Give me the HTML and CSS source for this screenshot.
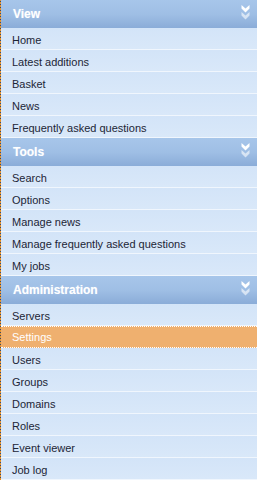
FILE: index.html
```html
<!DOCTYPE html>
<html lang="en">
<head>
  <meta charset="UTF-8" />
  <title>Navigation</title>
  <link rel="stylesheet" href="styles.css">
</head>
<body>
  <div class="sidebar">
    <div class="group">
      <div class="group-head">
        <span>View</span>
        <svg class="chevron" width="9" height="15" viewBox="0 0 9 15"><path d="M0.5 0 L4.5 3.5 L8.5 0 L8.5 3.5 L4.5 7.5 L0.5 3.5 Z" fill="#fff"/><path d="M0.5 7 L4.5 10.5 L8.5 7 L8.5 10.5 L4.5 14.5 L0.5 10.5 Z" fill="#fff" opacity="0.6"/></svg>
      </div>
      <ul class="items">
        <li>Home</li>
        <li>Latest additions</li>
        <li>Basket</li>
        <li>News</li>
        <li>Frequently asked questions</li>
      </ul>
    </div>
    <div class="group">
      <div class="group-head">
        <span>Tools</span>
        <svg class="chevron" width="9" height="15" viewBox="0 0 9 15"><path d="M0.5 0 L4.5 3.5 L8.5 0 L8.5 3.5 L4.5 7.5 L0.5 3.5 Z" fill="#fff"/><path d="M0.5 7 L4.5 10.5 L8.5 7 L8.5 10.5 L4.5 14.5 L0.5 10.5 Z" fill="#fff" opacity="0.6"/></svg>
      </div>
      <ul class="items">
        <li>Search</li>
        <li>Options</li>
        <li>Manage news</li>
        <li>Manage frequently asked questions</li>
        <li>My jobs</li>
      </ul>
    </div>
    <div class="group">
      <div class="group-head">
        <span>Administration</span>
        <svg class="chevron" width="9" height="15" viewBox="0 0 9 15"><path d="M0.5 0 L4.5 3.5 L8.5 0 L8.5 3.5 L4.5 7.5 L0.5 3.5 Z" fill="#fff"/><path d="M0.5 7 L4.5 10.5 L8.5 7 L8.5 10.5 L4.5 14.5 L0.5 10.5 Z" fill="#fff" opacity="0.6"/></svg>
      </div>
      <ul class="items">
        <li>Servers</li>
        <li class="active">Settings</li>
        <li>Users</li>
        <li>Groups</li>
        <li>Domains</li>
        <li>Roles</li>
        <li>Event viewer</li>
        <li>Job log</li>
      </ul>
    </div>
  </div>
</body>
</html>
```

FILE: styles.css
```css
* {
  box-sizing: border-box;
}

body {
  margin: 0;
  background: #fff;
  font-family: 'Liberation Sans', Arial, sans-serif;
  font-size: 11px;
}

.sidebar {
  width: 257px;
  border-left: 1px solid;
  border-image: repeating-linear-gradient(#e8922a 0 2px, #3a4a6a 2px 3px) 1;
  background: #d6e6f8;
}

.group-head {
  height: 28px;
  display: flex;
  align-items: center;
  justify-content: space-between;
  padding: 0 7px 1px 12px;
  background: linear-gradient(#a7c6ea, #9fbfe5 50%, #8aacd8);
  color: #fff;
  font-weight: bold;
  font-size: 12px;
  text-shadow: 0 0 1px #c8daf0;
}

.chevron {
  margin-bottom: 2px;
}

.items {
  list-style: none;
  margin: 0;
  padding: 0;
}

.items li {
  height: 22px;
  line-height: 20px;
  padding: 2px 0 0 11px;
  color: #1c2536;
  background: linear-gradient(#d3e4f8, #d9e8f9);
  border-bottom: 1px solid #f0f6fd;
}

.items li.active {
  background: #efb06f;
  color: #fff;
  border-top: 1px dotted #fff;
  border-bottom: 1px dotted #fff;
  padding-top: 1px;
  line-height: 19px;
}
```
